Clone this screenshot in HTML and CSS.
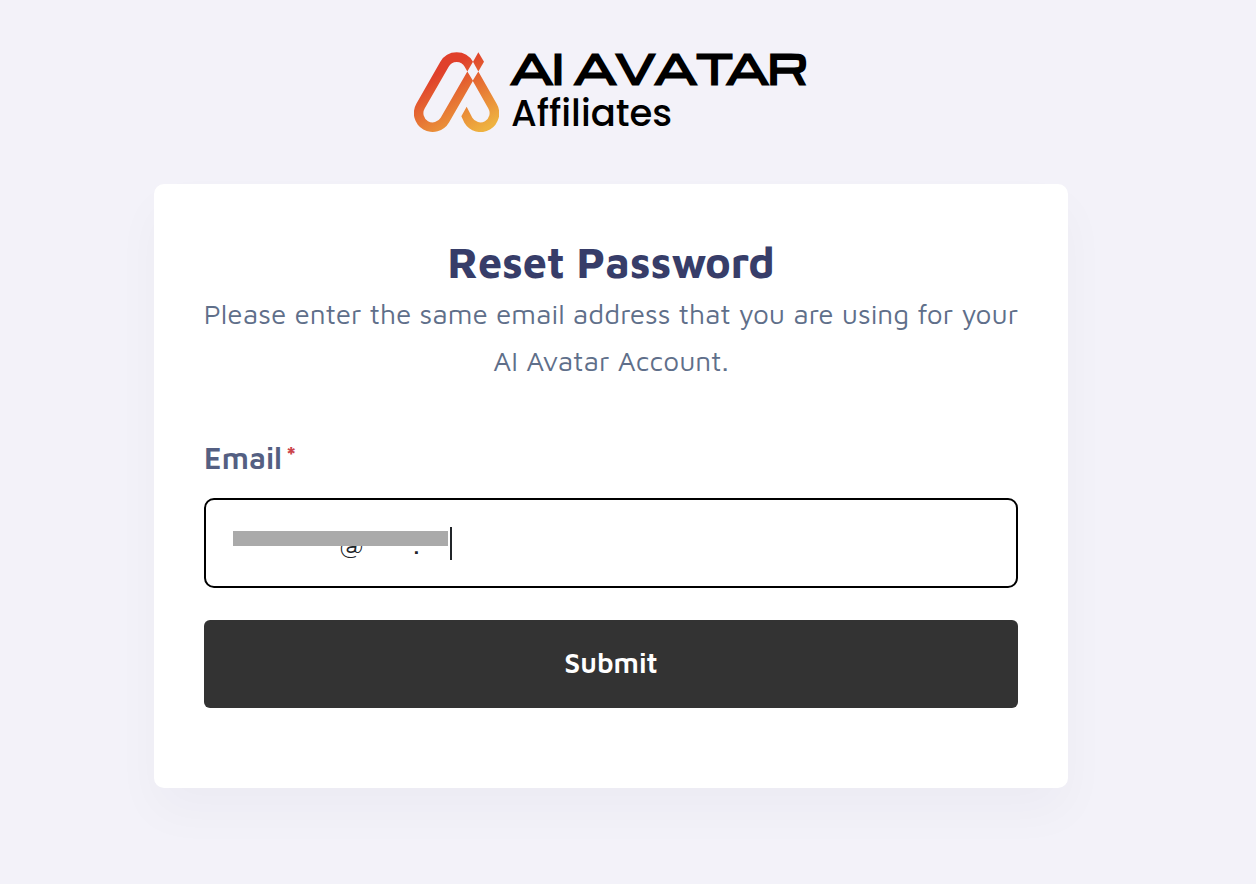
FILE: index.html
```html
<!DOCTYPE html>
<html lang="en">
<head>
    <meta charset="UTF-8">
    <meta name="viewport" content="width=device-width, initial-scale=1">
    <title>Reset Password</title>
    <link rel="stylesheet" href="styles.css">
</head>
<body>
<main class="page">
    <header class="logo">
        <svg class="logo-mark" viewBox="27 29 255 239" aria-hidden="true">
            <defs>
                <linearGradient id="flame" gradientUnits="userSpaceOnUse" x1="110" y1="60" x2="230" y2="265">
                    <stop offset="0.1" stop-color="#e0402b"/>
                    <stop offset="0.55" stop-color="#e77a35"/>
                    <stop offset="1" stop-color="#eeb240"/>
                </linearGradient>
            </defs>
            <g fill="url(#flame)">
                <path d="M204 58A56 56 0 0 0 106 58L34 184A56 56 0 0 0 132 240L204 115L187 87L107 226A27 27 0 0 1 59 198L131 73A27 27 0 0 1 179 73L187 87Z"/>
                <path d="M220 29L237 58L220 87L204 58Z"/>
                <path d="M220 87L275 184A56 56 0 0 1 178 241L169 221L185 193L202 226A27 27 0 0 0 250 198L203 115Z"/>
            </g>
        </svg>
        <div class="logo-text">
            <span class="logo-name">AI AVATAR</span>
            <span class="logo-sub">Affiliates</span>
        </div>
    </header>

    <section class="card">
        <h1>Reset Password</h1>
        <p>Please enter the same email address that you are using for your AI Avatar Account.</p>
        <form>
            <label for="email">Email<span class="required">*</span></label>
            <div class="field">
                <input type="text" id="email" name="email" value="&nbsp;&nbsp;&nbsp;&nbsp;&nbsp;&nbsp;&nbsp;&nbsp;&nbsp;&nbsp;&nbsp;&nbsp;&nbsp;@&nbsp;&nbsp;&nbsp;&nbsp;&nbsp;&nbsp;.">
                <span class="mask"></span>
                <span class="caret"></span>
            </div>
            <button type="submit">Submit</button>
        </form>
    </section>
</main>
</body>
</html>
```

FILE: styles.css
```css
* {
    box-sizing: border-box;
    margin: 0;
    padding: 0;
}

body {
    background: #f3f2f9;
    font-family: "Maven Pro", "Open Sans", sans-serif;
    font-size: 28px;
    color: #5f6f8a;
}

.page {
    display: flex;
    flex-direction: column;
    align-items: center;
    gap: 52px;
    padding: 52px 34px 96px 0;
}

.logo {
    display: flex;
    gap: 12px;
    width: 394px;
    height: 80px;
}

.logo-mark {
    flex: none;
    width: 85px;
    height: 80px;
}

.logo-text {
    display: flex;
    flex-direction: column;
    gap: 4px;
    color: #000;
    white-space: nowrap;
}

.logo-name {
    font: bold 39px/30px Michroma, Montserrat, "DejaVu Sans", sans-serif;
    -webkit-text-stroke: 2px #000;
}

.logo-sub {
    font: 500 37px/54px Poppins, Inter, sans-serif;
}

.card {
    width: 100%;
    max-width: 914px;
    padding: 50px 50px 80px;
    background: #fff;
    border-radius: 10px;
    box-shadow: 0 24px 48px rgba(18, 38, 63, 0.03);
    text-align: center;
}

h1 {
    font-size: 43px;
    line-height: 56px;
    font-weight: 700;
    color: #373d69;
}

p {
    margin: 0 -8px;
    line-height: 47px;
}

form {
    display: flex;
    flex-direction: column;
    margin-top: 52px;
    text-align: left;
}

label {
    margin-bottom: 18px;
    font-size: 30px;
    line-height: 44px;
    font-weight: 600;
    color: #545f82;
}

.required {
    margin-left: 3px;
    font-size: 30px;
    line-height: 1;
    color: #cb444a;
}

.field {
    position: relative;
    margin-bottom: 32px;
}

input {
    display: block;
    width: 100%;
    height: 90px;
    padding: 0 27px;
    border: 2px solid #000;
    border-radius: 10px;
    outline: none;
    background: #fff;
    font: inherit;
    color: #212529;
}

/* hides the address typed in the box */
.mask {
    position: absolute;
    left: 29px;
    top: 33px;
    width: 215px;
    height: 15px;
    background: #aaa;
}

.caret {
    position: absolute;
    left: 246px;
    top: 29px;
    width: 2px;
    height: 33px;
    background: #212529;
}

button {
    height: 88px;
    padding-bottom: 4px;
    border: 0;
    border-radius: 6px;
    background: #333;
    font: inherit;
    font-weight: 600;
    color: #fff;
    cursor: pointer;
}
```
